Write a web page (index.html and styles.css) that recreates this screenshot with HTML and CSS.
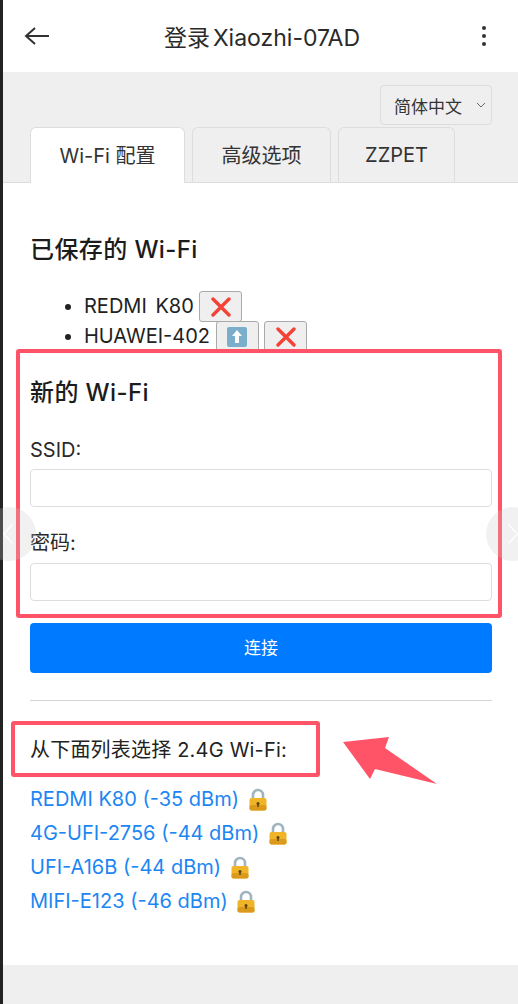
FILE: index.html
```html
<!DOCTYPE html>
<html lang="zh-CN">
<head>
    <meta charset="UTF-8">
    <meta name="viewport" content="width=device-width, initial-scale=1.0">
    <title>登录 Xiaozhi-07AD</title>
    <link rel="stylesheet" href="styles.css">
</head>
<body>

<div class="page">
    <header class="topbar">
        <svg class="back-icon" width="26" height="20" viewBox="0 0 26 20"><path d="M25 10H2M11 2l-9 8 9 8" fill="none" stroke="#333" stroke-width="2"/></svg>
        <h1 class="topbar-title">登录<span class="title-gap"></span>Xiaozhi-07AD</h1>
        <svg class="more-icon" width="6" height="22" viewBox="0 0 6 22"><circle cx="3" cy="3" r="2" fill="#333"/><circle cx="3" cy="11" r="2" fill="#333"/><circle cx="3" cy="19" r="2" fill="#333"/></svg>
    </header>

    <section class="tabs-area">
        <div class="lang-row">
            <div class="lang-select">简体中文
                <svg width="10" height="6" viewBox="0 0 10 6"><path d="M1 1l4 4 4-4" fill="none" stroke="#666" stroke-width="1"/></svg>
            </div>
        </div>
        <div class="tabs">
            <div class="tab active">Wi-Fi 配置</div>
            <div class="tab tab-adv">高级选项</div>
            <div class="tab tab-pet">ZZPET</div>
        </div>
    </section>

    <main class="content">
        <h3 class="saved-title">已保存的 Wi-Fi</h3>
        <ul class="saved-list">
            <li>REDMI K80 <button class="icon-btn"><svg width="22" height="20" viewBox="0 0 22 20"><path d="M3 2l16 16M19 2L3 18" stroke="#f44336" stroke-width="3.4" stroke-linecap="round"/></svg></button></li>
            <li>HUAWEI-402 <button class="icon-btn"><svg width="20" height="20" viewBox="0 0 20 20"><rect x="0" y="0" width="20" height="20" rx="2" fill="#7aaecb"/><path d="M10 3l5 6h-3v7H8V9H5z" fill="#fff"/></svg></button> <button class="icon-btn"><svg width="22" height="20" viewBox="0 0 22 20"><path d="M3 2l16 16M19 2L3 18" stroke="#f44336" stroke-width="3.4" stroke-linecap="round"/></svg></button></li>
        </ul>

        <h3 class="new-title">新的 Wi-Fi</h3>
        <label class="field-label" for="ssid">SSID:</label>
        <input class="field-input" type="text" id="ssid">
        <label class="field-label field-label-pass" for="password">密码:</label>
        <input class="field-input" type="password" id="password">
        <button class="connect-btn">连接</button>
        <hr class="divider">

        <p class="scan-title">从下面列表选择 2.4G Wi-Fi:</p>
        <div class="scan-list">
            <a class="scan-item" href="#">REDMI K80 (-35 dBm) <svg class="lock" width="18" height="23" viewBox="0 0 18 23"><use href="#lock-shape"/></svg></a>
            <a class="scan-item" href="#">4G-UFI-2756 (-44 dBm) <svg class="lock" width="18" height="23" viewBox="0 0 18 23"><use href="#lock-shape"/></svg></a>
            <a class="scan-item" href="#">UFI-A16B (-44 dBm) <svg class="lock" width="18" height="23" viewBox="0 0 18 23"><use href="#lock-shape"/></svg></a>
            <a class="scan-item" href="#">MIFI-E123 (-46 dBm) <svg class="lock" width="18" height="23" viewBox="0 0 18 23"><use href="#lock-shape"/></svg></a>
        </div>
    </main>

    <footer class="bottom-band"></footer>
</div>

<svg class="defs" width="0" height="0">
    <defs>
        <g id="lock-shape">
            <path d="M4 11V7a5 5 0 0 1 10 0v4" fill="none" stroke="#9fb4bf" stroke-width="2.6"/>
            <rect x="0.500" y="10" width="17" height="12.500" rx="2" fill="#f0b429"/>
            <rect x="0.500" y="17" width="17" height="5.500" rx="2" fill="#dc9a1c"/>
            <circle cx="9" cy="15.500" r="1.500" fill="#5b4210"/>
            <rect x="8.300" y="15.500" width="1.400" height="3.500" fill="#5b4210"/>
        </g>
    </defs>
</svg>

<!-- things drawn over the screenshot -->
<div class="mark mark-form"></div>
<div class="mark mark-scan"></div>
<svg class="mark-arrow" width="110" height="60" viewBox="0 0 110 60"><polygon points="3,17 49,12 45,23 97,59 35,44 30,54" fill="#ff5467"/></svg>

<div class="side-nav side-prev"><svg width="10" height="20" viewBox="0 0 10 20"><path d="M9.500 0.500L0.500 10l9 9.500" fill="none" stroke="#fff" stroke-width="1.200"/></svg></div>
<div class="side-nav side-next"><svg width="10" height="20" viewBox="0 0 10 20"><path d="M0.500 0.500l9 9.500-9 9.500" fill="none" stroke="#fff" stroke-width="1.200"/></svg></div>

</body>
</html>
```

FILE: styles.css
```css
html, body {
    margin: 0;
    padding: 0;
    height: 1004px;
    overflow: hidden;
}

body {
    position: relative;
    background: #232323;
    font-family: Inter, "Noto Sans CJK SC", sans-serif;
    color: #222;
}

.page {
    margin-left: 3px;
    height: 1004px;
    background: #fff;
    display: flex;
    flex-direction: column;
}

.topbar {
    height: 72px;
    flex: none;
    display: flex;
    align-items: center;
    justify-content: space-between;
    padding: 0 31px 0 21px;
    box-sizing: border-box;
}

.topbar-title {
    margin: 0 0 0 -7px;
    font-size: 23px;
    font-weight: 400;
    color: #2a2a2a;
}

.title-gap {
    display: inline-block;
    width: 3px;
}

.tabs-area {
    height: 111px;
    flex: none;
    background: #efefef;
    border-bottom: 1px solid #ddd;
    box-sizing: border-box;
    display: flex;
    flex-direction: column;
}

.lang-row {
    display: flex;
    justify-content: flex-end;
    padding: 13px 26px 0 0;
}

.lang-select {
    width: 112px;
    height: 40px;
    box-sizing: border-box;
    border: 1px solid #ddd;
    border-radius: 4px;
    display: flex;
    align-items: center;
    justify-content: space-between;
    padding: 0 5px 0 13px;
    font-size: 17px;
    color: #333;
}

.tabs {
    display: flex;
    gap: 7px;
    padding: 2px 0 0 27px;
    height: 57px;
    box-sizing: border-box;
}

.tab {
    height: 56px;
    padding-bottom: 2px;
    box-sizing: border-box;
    border: 1px solid #ddd;
    border-bottom: none;
    border-radius: 6px 6px 0 0;
    display: flex;
    align-items: center;
    justify-content: center;
    font-size: 20px;
    color: #333;
    width: 139px;
}

.tab.active {
    width: 155px;
    background: #fff;
}

.tab-pet {
    width: 117px;
}

.content {
    flex: 1;
    padding: 0 26px 0 27px;
    display: flex;
    flex-direction: column;
}

.saved-title,
.new-title {
    margin: 0;
    font-size: 24px;
    font-weight: 500;
    line-height: 30px;
    letter-spacing: 0.4px;
    color: #1c1c1c;
}

.saved-title {
    margin-top: 52px;
}

.saved-list {
    margin: 26px 0 0;
    padding: 0 0 0 54px;
    height: 61px;
    font-size: 20px;
    line-height: 30px;
    word-spacing: 3px;
}

.saved-list li {
    height: 30px;
}

.icon-btn {
    width: 43px;
    height: 31px;
    padding: 0;
    margin: -2px 0 0 -3px;
    background: #efefef;
    border: 1px solid #aaa;
    border-radius: 3px;
    box-sizing: border-box;
    vertical-align: middle;
    display: inline-flex;
    align-items: center;
    justify-content: center;
}

.icon-btn svg {
    display: block;
}

.new-title {
    margin-top: 26px;
}

.field-label {
    font-size: 20px;
    line-height: 26px;
    margin-top: 29px;
    margin-bottom: 6px;
    color: #2a2a2a;
}

.field-label-pass {
    margin-top: 23px;
    margin-bottom: 7px;
}

.field-input {
    height: 38px;
    box-sizing: border-box;
    border: 1px solid #ddd;
    border-radius: 4px;
    background: #fff;
    flex: none;
}

.connect-btn {
    height: 50px;
    flex: none;
    margin-top: 22px;
    padding-bottom: 5px;
    background: #007bff;
    color: #fff;
    border: none;
    border-radius: 4px;
    font-family: inherit;
    font-size: 17px;
}

.divider {
    width: 100%;
    margin: 27px 0 0;
    border: none;
    border-top: 1px solid #d5d5d5;
}

.scan-title {
    margin: 36px 0 0;
    font-size: 20px;
    line-height: 26px;
    letter-spacing: 0.2px;
    color: #222;
}

.scan-list {
    margin-top: 19px;
    display: flex;
    flex-direction: column;
}

.scan-item {
    height: 34px;
    line-height: 34px;
    font-size: 20px;
    color: #1c86f2;
    text-decoration: none;
}

.lock {
    vertical-align: -5px;
    margin-left: 4px;
}

.bottom-band {
    height: 39px;
    flex: none;
    background: #efefef;
}

.defs {
    position: absolute;
}

.mark {
    position: absolute;
    box-sizing: border-box;
    border: 4px solid #ff5467;
    border-radius: 3px;
}

.mark-form {
    left: 16px;
    top: 349px;
    width: 486px;
    height: 269px;
}

.mark-scan {
    left: 11px;
    top: 721px;
    width: 309px;
    height: 56px;
}

.mark-arrow {
    position: absolute;
    left: 340px;
    top: 725px;
}

.side-nav {
    position: absolute;
    top: 507px;
    width: 54px;
    height: 54px;
    border-radius: 50%;
    background: rgba(200, 200, 200, 0.25);
    display: flex;
    align-items: center;
}

.side-prev {
    left: -18px;
}

.side-prev svg {
    margin-left: 21px;
}

.side-next {
    left: 486px;
}

.side-next svg {
    margin-left: 22px;
}
```
